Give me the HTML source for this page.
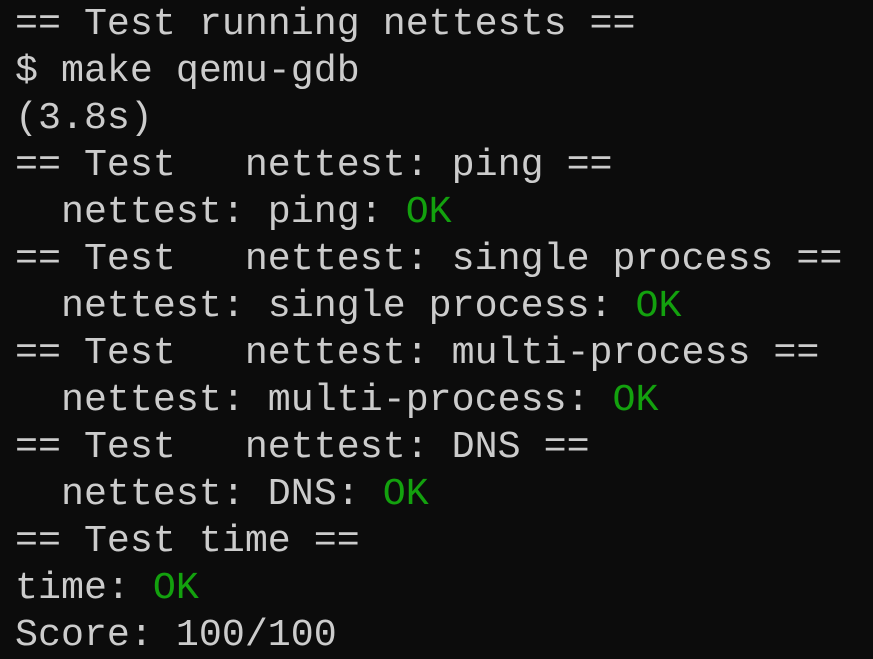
<html><head><style>
body{margin:0;background:#0c0c0c;width:873px;height:652px;overflow:hidden}
pre{margin:0;padding:0 0 0 15px;position:relative;top:1px;font-family:"Liberation Mono","DejaVu Sans Mono",monospace;font-size:38.3px;line-height:47px;color:#cccccc}
.g{color:#13a10e}
</style></head><body><pre>== Test running nettests ==
$ make qemu-gdb
(3.8s)
== Test   nettest: ping ==
  nettest: ping: <span class="g">OK</span>
== Test   nettest: single process ==
  nettest: single process: <span class="g">OK</span>
== Test   nettest: multi-process ==
  nettest: multi-process: <span class="g">OK</span>
== Test   nettest: DNS ==
  nettest: DNS: <span class="g">OK</span>
== Test time ==
time: <span class="g">OK</span>
Score: 100/100</pre></body></html>
